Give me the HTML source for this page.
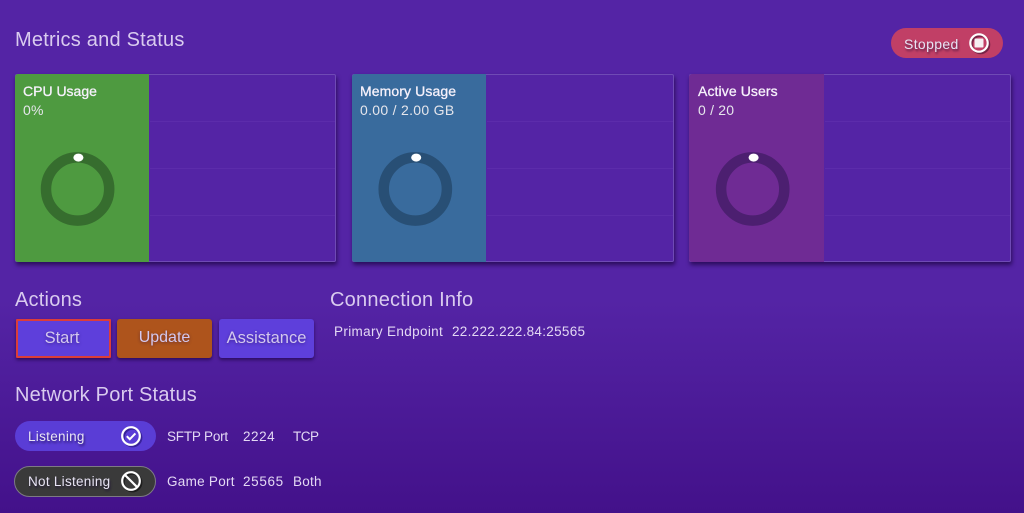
<!DOCTYPE html>
<html lang="en">
<head>
<meta charset="utf-8">
<title>Metrics and Status</title>
<style>
html,body{margin:0;padding:0}
body{width:1024px;height:513px;overflow:hidden;position:relative;font-family:"Liberation Sans",sans-serif;background:linear-gradient(180deg,#5424a5 0,#5424a5 300px,#43118a 513px);}
.t{position:absolute;white-space:nowrap;line-height:1}
.h{font-size:20px;color:#d9cbef;letter-spacing:.22px}
.b{font-size:13.5px;color:#e3d8f4;letter-spacing:.3px}
.card{position:absolute;top:74px;width:322px;height:188px;box-shadow:1px 3px 4px rgba(30,5,70,.75);border:1px solid #6f4ab5;box-sizing:border-box;border-radius:2px}
.side{position:absolute;left:-1px;top:-1px;bottom:-1px;width:134px;border-radius:3px 0 0 3px}
.line{position:absolute;left:134px;right:0;height:1px;background:#5c2cab}
.ct{font-size:14px;color:#f6f1fb;left:7px;top:9px;letter-spacing:.1px;-webkit-text-stroke:.3px #f6f1fb}
.cv{font-size:14px;color:#e6e6ec;left:7px;top:27.5px;letter-spacing:.2px}
.card svg{position:absolute;left:0;top:0}
.btn{position:absolute;top:319px;height:39px;box-sizing:border-box;border-radius:3px;color:#d3c8ee;font-size:16.5px;text-align:center;line-height:38px;box-shadow:0 2px 3px rgba(30,5,70,.7);text-shadow:0 1px 3px rgba(30,5,70,.45)}
.pill{position:absolute;border-radius:16px;box-sizing:border-box}
.pt{font-size:13.5px;color:#e8e4f4;text-shadow:1px 2px 2px rgba(20,5,50,.6);letter-spacing:.2px}
svg.ic{position:absolute;overflow:visible}
</style>
</head>
<body>

<div class="t h" style="left:15px;top:30px">Metrics and Status</div>

<div class="pill" style="left:891px;top:28px;width:112px;height:30px;background:#c13f66"></div>
<div class="t pt" style="left:904px;top:36.5px;font-size:14px;letter-spacing:.35px">Stopped</div>
<svg class="ic" style="left:968px;top:32px" width="24" height="24" viewBox="0 0 24 24">
  <circle cx="12.5" cy="12.5" r="8.7" fill="none" stroke="#5e1c3c" stroke-width="2.2" opacity=".75"/>
  <circle cx="11" cy="11" r="8.7" fill="none" stroke="#fff" stroke-width="2.2"/>
  <rect x="6.5" y="6.5" width="9" height="9" rx="1" fill="#f6eef2"/>
</svg>

<!-- CPU -->
<div class="card" style="left:15px;width:321px">
  <div class="side" style="background:#4e9a40"></div>
  <div class="line" style="top:46px"></div>
  <div class="line" style="top:93px"></div>
  <div class="line" style="top:140px"></div>
  <div class="t ct" style="letter-spacing:0">CPU Usage</div>
  <div class="t cv">0%</div>
  <svg width="134" height="188" style="left:-1px;top:-1px">
    <circle cx="62.6" cy="115" r="31.6" fill="none" stroke="#366d2e" stroke-width="10.5"/>
    <ellipse cx="63.4" cy="83.6" rx="5" ry="4" fill="#fff"/>
  </svg>
</div>

<!-- Memory -->
<div class="card" style="left:352px;width:322px">
  <div class="side" style="background:#396b9d"></div>
  <div class="line" style="top:46px"></div>
  <div class="line" style="top:93px"></div>
  <div class="line" style="top:140px"></div>
  <div class="t ct">Memory Usage</div>
  <div class="t cv" style="letter-spacing:.3px">0.00 / 2.00 GB</div>
  <svg width="134" height="188" style="left:-1px;top:-1px">
    <circle cx="63.3" cy="115" r="31.6" fill="none" stroke="#284f75" stroke-width="10.5"/>
    <ellipse cx="64.2" cy="83.6" rx="5" ry="4" fill="#fff"/>
  </svg>
</div>

<!-- Users -->
<div class="card" style="left:689px;width:322px">
  <div class="side" style="width:135px;background:#6f2b94"></div>
  <div class="line" style="top:46px;left:135px"></div>
  <div class="line" style="top:93px;left:135px"></div>
  <div class="line" style="top:140px;left:135px"></div>
  <div class="t ct" style="left:8px">Active Users</div>
  <div class="t cv" style="left:8px">0 / 20</div>
  <svg width="135" height="188" style="left:-1px;top:-1px">
    <circle cx="63.7" cy="115" r="31.6" fill="none" stroke="#4c1f70" stroke-width="10.5"/>
    <ellipse cx="64.6" cy="83.6" rx="5" ry="4" fill="#fff"/>
  </svg>
</div>

<div class="t h" style="left:15px;top:289.5px">Actions</div>
<div class="t h" style="left:330px;top:289.5px">Connection Info</div>

<div class="btn" style="left:16px;width:95px;background:#5e3fdb;border:2px solid #dc3d3a;line-height:35px;border-radius:1px;padding-right:3px">Start</div>
<div class="btn" style="left:117px;width:95px;background:#ae541c;font-size:16px">Update</div>
<div class="btn" style="left:219px;width:95px;background:#5e3fdb">Assistance</div>

<div class="t b" style="left:334px;top:325px;letter-spacing:.35px">Primary Endpoint</div>
<div class="t b" style="left:452px;top:325px;letter-spacing:.3px">22.222.222.84:25565</div>

<div class="t h" style="left:15px;top:384.5px">Network Port Status</div>

<div class="pill" style="left:15px;top:421px;width:141px;height:30px;background:#5a3dd6"></div>
<div class="t pt" style="left:28px;top:430px;letter-spacing:.3px">Listening</div>
<svg class="ic" style="left:120px;top:425px" width="24" height="24" viewBox="0 0 24 24">
  <circle cx="12.5" cy="12.5" r="8.8" fill="none" stroke="#2a1580" stroke-width="2.2" opacity=".7"/>
  <circle cx="11" cy="11" r="8.8" fill="none" stroke="#fff" stroke-width="2.2"/>
  <path d="M6.8 11.2l3 3 5.6-5.8" fill="none" stroke="#fff" stroke-width="2"/>
</svg>

<div class="pill" style="left:14px;top:466px;width:142px;height:31px;background:#3a3a3a;border:1px solid #7d7a84"></div>
<div class="t pt" style="left:28px;top:475px;letter-spacing:.28px">Not Listening</div>
<svg class="ic" style="left:120px;top:470px" width="24" height="24" viewBox="0 0 24 24">
  <circle cx="12.5" cy="12.5" r="8.8" fill="none" stroke="#111" stroke-width="2.2" opacity=".7"/>
  <circle cx="11" cy="11" r="8.8" fill="none" stroke="#fff" stroke-width="2.2"/>
  <path d="M4.8 4.8l12.4 12.4" fill="none" stroke="#fff" stroke-width="2.2"/>
</svg>

<div class="t b" style="left:167px;top:430px;letter-spacing:-.2px">SFTP Port</div>
<div class="t b" style="left:243px;top:430px;letter-spacing:.55px">2224</div>
<div class="t b" style="left:293px;top:430px;letter-spacing:-.5px">TCP</div>
<div class="t b" style="left:167px;top:475px;letter-spacing:.28px">Game Port</div>
<div class="t b" style="left:243px;top:475px;letter-spacing:.65px">25565</div>
<div class="t b" style="left:293px;top:475px;letter-spacing:.25px">Both</div>

</body>
</html>
